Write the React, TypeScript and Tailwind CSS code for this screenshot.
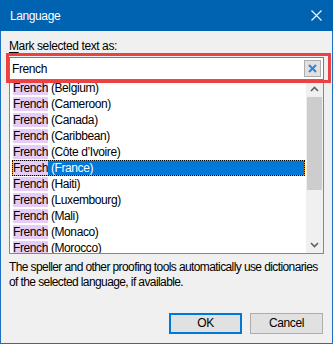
import React from "react";

const rows = [
  "Belgium",
  "Cameroon",
  "Canada",
  "Caribbean",
  "Côte d’Ivoire",
  "France",
  "Haiti",
  "Luxembourg",
  "Mali",
  "Monaco",
  "Morocco",
];

const font = { fontFamily: '"Liberation Sans", Arial, sans-serif' };

export default function App() {
  return (
    <div
      className="relative w-[333px] h-[344px] bg-[#f0f0f0] border-x border-b border-[#1c6fc1] text-[12px] tracking-[-0.4px] text-black"
      style={font}
    >
      {/* Title bar */}
      <div className="h-[31px] -mx-px bg-[#0063b1] flex items-center pl-[10px] pr-[10px] text-white">
        <span className="flex-1 leading-[16px]">Language</span>
        <svg width="11" height="11" viewBox="0 0 11 11" className="mr-[1px]">
          <path d="M0.5 0.5 L10.5 10.5 M10.5 0.5 L0.5 10.5" stroke="#fff" strokeWidth="1.1" />
        </svg>
      </div>

      <div className="px-[8px]">
        <div className="mt-[7px] h-[16px] leading-[16px]">
          <span className="underline underline-offset-2">M</span>ark selected text as:
        </div>

        {/* Input */}
        <div className="mt-[3px] h-[23px] bg-white border border-[#7a7a7a] flex items-start">
          <div className="flex-1 pl-[2px] leading-[20px] mt-[1px]">French</div>
          <div className="mt-[2px] mr-[2px] w-[17px] h-[17px] bg-[#e1e1e1] border border-[#adadad] flex items-center justify-center">
            <svg width="9" height="9" viewBox="0 0 9 9">
              <path d="M1 1 L8 8 M8 1 L1 8" stroke="#2a87d5" strokeWidth="2" />
            </svg>
          </div>
        </div>

        {/* List */}
        <div className="h-[174px] bg-white border-x border-b border-[#828790] flex overflow-hidden">
          <div className="flex-1 flex flex-col">
            {rows.map((r) => {
              const sel = r === "France";
              return (
                <div
                  key={r}
                  className={
                    sel
                      ? "shrink-0 h-[16px] ml-[2px] mr-[1px] bg-[#0078d7] text-white border border-[#f09a2a] outline outline-1 outline-dotted outline-black -outline-offset-1 flex items-center"
                      : "shrink-0 h-[16px] ml-[2px] mr-[1px] border border-transparent flex items-center"
                  }
                >
                  <span className="bg-[#e6cdf7] text-black leading-[14px]">French</span>
                  <span className="leading-[14px]">&nbsp;({r})</span>
                </div>
              );
            })}
          </div>
          {/* Scrollbar */}
          <div className="w-[17px] bg-[#f0f0f0] flex flex-col">
            <div className="h-[17px] flex items-center justify-center">
              <svg width="9" height="6" viewBox="0 0 9 6">
                <path d="M1 5 L4.5 1.5 L8 5" stroke="#606060" strokeWidth="1.6" fill="none" />
              </svg>
            </div>
            <div className="h-[93px] mx-[1px] bg-[#cdcdcd]" />
            <div className="flex-1" />
            <div className="h-[17px] flex items-center justify-center">
              <svg width="9" height="6" viewBox="0 0 9 6">
                <path d="M1 1 L4.5 4.5 L8 1" stroke="#606060" strokeWidth="1.6" fill="none" />
              </svg>
            </div>
          </div>
        </div>

        {/* Description */}
        <div className="mt-[6px] leading-[15px] whitespace-nowrap tracking-[-0.6px]">
          <div>The speller and other proofing tools automatically use dictionaries</div>
          <div>of the selected language, if available.</div>
        </div>

        {/* Buttons */}
        <div className="mt-[23px] flex justify-end gap-[8px] mr-[1px]">
          <button className="w-[73px] h-[21px] bg-[#e1e1e1] border-2 border-[#0078d7] leading-[17px]">
            OK
          </button>
          <button className="w-[73px] h-[21px] bg-[#e1e1e1] border border-[#adadad] leading-[19px]">
            Cancel
          </button>
        </div>
      </div>

      {/* Red annotation box */}
      <div className="absolute left-[5px] top-[53px] w-[325px] h-[30px] border-[3px] border-[#ec4141] pointer-events-none" />
    </div>
  );
}
